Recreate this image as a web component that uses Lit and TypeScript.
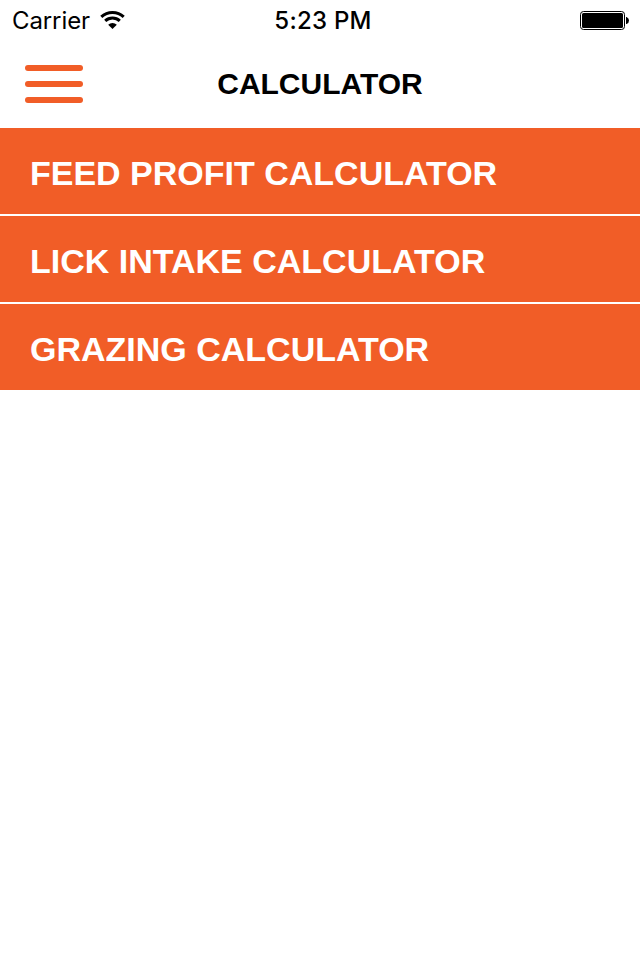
import { LitElement, html, css } from "lit";
import { customElement } from "lit/decorators.js";

@customElement("app-root")
class AppRoot extends LitElement {
  static styles = css`
    :host { display: block; height: 960px; background: #fff; overflow: hidden; font-family: "Liberation Sans", Arial, sans-serif; }
    .status { display: grid; grid-template-columns: 1fr auto 1fr; height: 40px; align-items: center; font-family: Inter, sans-serif; font-size: 24px; line-height: 38px; color: #000; }
    .left { display: flex; align-items: center; padding-left: 12px; gap: 10px; white-space: nowrap; }
    .carrier { width: 78px; padding-top: 2px; letter-spacing: -0.1px; }
    .time { font-weight: 500; padding: 2px 0 0 6px; letter-spacing: 0.25px; white-space: nowrap; }
    .right { display: flex; justify-content: flex-end; padding-right: 11px; }
    svg { display: block; }
    .nav { display: grid; grid-template-columns: 1fr auto 1fr; height: 88px; align-items: center; }
    .menu { margin: 0 0 0 25px; width: 58px; }
    .title { margin: 0; font-size: 30px; font-weight: 700; line-height: 36px; }
    .list { display: flex; flex-direction: column; gap: 2px; }
    .row { height: 86px; box-sizing: border-box; padding: 4px 30px 0; display: flex; align-items: center; background: #f15d27; color: #fff; font-weight: 700; font-size: 34px; white-space: nowrap; }
  `;

  render() {
    const items = ["FEED PROFIT CALCULATOR", "LICK INTAKE CALCULATOR", "GRAZING CALCULATOR"];
    return html`
      <div class="status">
        <div class="left">
          <span class="carrier">Carrier</span>
          <svg width="26" height="20" viewBox="0 0 26 20">
            <path d="M1.3 6.9a16.2 16.2 0 0 1 22.4 0M5.2 10.8a10.6 10.6 0 0 1 14.6 0" fill="none" stroke="#000" stroke-width="3"/>
            <path d="M8.2 14.8a6.3 6.3 0 0 1 8.6 0L12.5 19.1z"/>
          </svg>
        </div>
        <span class="time">5:23 PM</span>
        <div class="right">
          <svg width="49" height="19" viewBox="0 0 49 19">
            <rect x=".5" y=".5" width="44" height="18" rx="3" fill="none" stroke="#000"/>
            <rect x="2" y="2" width="41" height="15" rx="1.5"/>
            <path d="M46 6h.6q2.4 1 2.4 3.5t-2.4 3.5H46z"/>
          </svg>
        </div>
      </div>
      <header class="nav">
        <svg class="menu" width="58" height="38" viewBox="0 0 58 38" fill="#f15d27">
          <rect width="58" height="6" rx="3"/><rect y="16" width="58" height="6" rx="3"/><rect y="32" width="58" height="6" rx="3"/>
        </svg>
        <h1 class="title">CALCULATOR</h1>
      </header>
      <main class="list">${items.map((t) => html`<div class="row">${t}</div>`)}</main>
    `;
  }
}
